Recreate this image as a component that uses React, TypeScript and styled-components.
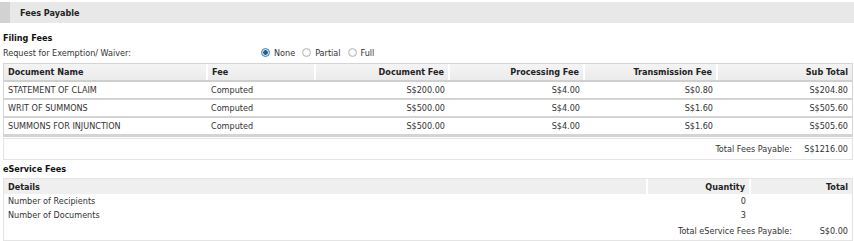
import React from "react";
import styled, { createGlobalStyle } from "styled-components";

const Global = createGlobalStyle`
  html, body { margin: 0; padding: 0; background: #fff; }
  body { font-family: "DejaVu Sans Condensed", "DejaVu Sans", Verdana, sans-serif; font-size: 9px; color: #333; }
`;

const Page = styled.div`
  width: 854px;
  padding-top: 2px;
`;

const TitleBar = styled.div`
  height: 21px;
  display: flex;
  align-items: center;
  background: #e8e8e8;
  border-left: 10px solid #d2d2d2;
  padding-left: 10px;
  margin-bottom: 8px;
  font-weight: bold;
  color: #222;
`;

const SectionTitle = styled.div<{ $gap?: number }>`
  font-weight: bold;
  color: #111;
  padding: 0 3px;
  height: 14px;
  margin-top: ${(p) => p.$gap ?? 0}px;
  display: flex;
  align-items: center;
`;

const WaiverRow = styled.div`
  display: flex;
  align-items: center;
  height: 15px;
  margin-bottom: 3px;
  padding-left: 3px;
`;

const WaiverLabel = styled.span`
  width: 258px;
`;

const RadioGroup = styled.div`
  display: flex;
  align-items: center;
  gap: 7px;
`;

const RadioItem = styled.label`
  display: flex;
  align-items: center;
  gap: 4px;
`;

const RadioDot = styled.span<{ $on?: boolean }>`
  width: 9px;
  height: 9px;
  border-radius: 50%;
  box-sizing: border-box;
  border: 1px solid ${(p) => (p.$on ? "#4d7fa8" : "#b8b8b8")};
  background: ${(p) =>
    p.$on ? "radial-gradient(circle, #1f5d95 0 2px, #cfe2f2 2.5px)" : "radial-gradient(circle, #fff 0 2px, #e4e4e4 4px)"};
`;

const TableBox = styled.div`
  margin: 0 1px 0 3px;
  border: 1px solid #d4d4d4;
`;

const Table = styled.table`
  width: 100%;
  border-collapse: collapse;
  table-layout: fixed;
`;

const Th = styled.th<{ $right?: boolean; $w?: number }>`
  height: 16px;
  padding: 0 4px;
  font-weight: bold;
  color: #222;
  text-align: ${(p) => (p.$right ? "right" : "left")};
  background: linear-gradient(#f4f4f4, #ebebeb);
  border-left: 2px solid #fff;
  border-bottom: 2px solid #cfcfcf;
  width: ${(p) => (p.$w ? `${p.$w}px` : "auto")};
  &:first-child { border-left: none; }
`;

const Td = styled.td<{ $right?: boolean }>`
  height: 16px;
  padding: 0 4px;
  text-align: ${(p) => (p.$right ? "right" : "left")};
  border-bottom: 2px solid #d4d4d4;
`;

const TotalBox = styled.div`
  margin: 1px 1px 0 3px;
  height: 20px;
  border: 1px solid #e4e4e4;
  display: flex;
  align-items: center;
  justify-content: flex-end;
  padding-right: 4px;
`;

const TotalLabel = styled.span<{ $w: number }>`
  width: ${(p) => p.$w}px;
  text-align: right;
  white-space: nowrap;
`;

const ServiceBox = styled.div`
  margin: 2px 1px 0 3px;
  border: 1px solid #e4e4e4;
`;

const STh = styled.th<{ $right?: boolean; $w?: number }>`
  height: 15px;
  padding: 0 4px;
  font-weight: bold;
  color: #222;
  text-align: ${(p) => (p.$right ? "right" : "left")};
  background: #efefef;
  border-left: 2px solid #fff;
  width: ${(p) => (p.$w ? `${p.$w}px` : "auto")};
  &:first-child { border-left: none; }
`;

const STd = styled.td<{ $right?: boolean; $h?: number }>`
  height: ${(p) => p.$h ?? 14}px;
  padding: 0 4px;
  text-align: ${(p) => (p.$right ? "right" : "left")};
`;

const FootLine = styled.div`
  display: flex;
  justify-content: flex-end;
  align-items: center;
`;

const rows = [
  ["STATEMENT OF CLAIM", "Computed", "S$200.00", "S$4.00", "S$0.80", "S$204.80"],
  ["WRIT OF SUMMONS", "Computed", "S$500.00", "S$4.00", "S$1.60", "S$505.60"],
  ["SUMMONS FOR INJUNCTION", "Computed", "S$500.00", "S$4.00", "S$1.60", "S$505.60"],
];

export default function App() {
  return (
    <Page>
      <Global />
      <TitleBar>Fees Payable</TitleBar>
      <SectionTitle>Filing Fees</SectionTitle>
      <WaiverRow>
        <WaiverLabel>Request for Exemption/ Waiver:</WaiverLabel>
        <RadioGroup>
          <RadioItem><RadioDot $on />None</RadioItem>
          <RadioItem><RadioDot />Partial</RadioItem>
          <RadioItem><RadioDot />Full</RadioItem>
        </RadioGroup>
      </WaiverRow>
      <TableBox>
        <Table>
          <thead>
            <tr>
              <Th $w={194}>Document Name</Th>
              <Th $w={98}>Fee</Th>
              <Th $right $w={124}>Document Fee</Th>
              <Th $right $w={125}>Processing Fee</Th>
              <Th $right $w={123}>Transmission Fee</Th>
              <Th $right>Sub Total</Th>
            </tr>
          </thead>
          <tbody>
            {rows.map((r) => (
              <tr key={r[0]}>
                <Td>{r[0]}</Td>
                <Td>{r[1]}</Td>
                <Td $right>{r[2]}</Td>
                <Td $right>{r[3]}</Td>
                <Td $right>{r[4]}</Td>
                <Td $right>{r[5]}</Td>
              </tr>
            ))}
          </tbody>
        </Table>
      </TableBox>
      <TotalBox>
        <TotalLabel $w={120}>Total Fees Payable:</TotalLabel>
        <TotalLabel $w={56}>S$1216.00</TotalLabel>
      </TotalBox>
      <SectionTitle $gap={2}>eService Fees</SectionTitle>
      <ServiceBox>
        <Table>
          <thead>
            <tr>
              <STh>Details</STh>
              <STh $right $w={93}>Quantity</STh>
              <STh $right $w={93}>Total</STh>
            </tr>
          </thead>
          <tbody>
            <tr><STd>Number of Recipients</STd><STd $right>0</STd><STd /></tr>
            <tr><STd>Number of Documents</STd><STd $right>3</STd><STd /></tr>
            <tr>
              <STd colSpan={3} $h={18}>
                <FootLine>
                  <TotalLabel $w={160}>Total eService Fees Payable:</TotalLabel>
                  <TotalLabel $w={56}>S$0.00</TotalLabel>
                </FootLine>
              </STd>
            </tr>
          </tbody>
        </Table>
      </ServiceBox>
    </Page>
  );
}
